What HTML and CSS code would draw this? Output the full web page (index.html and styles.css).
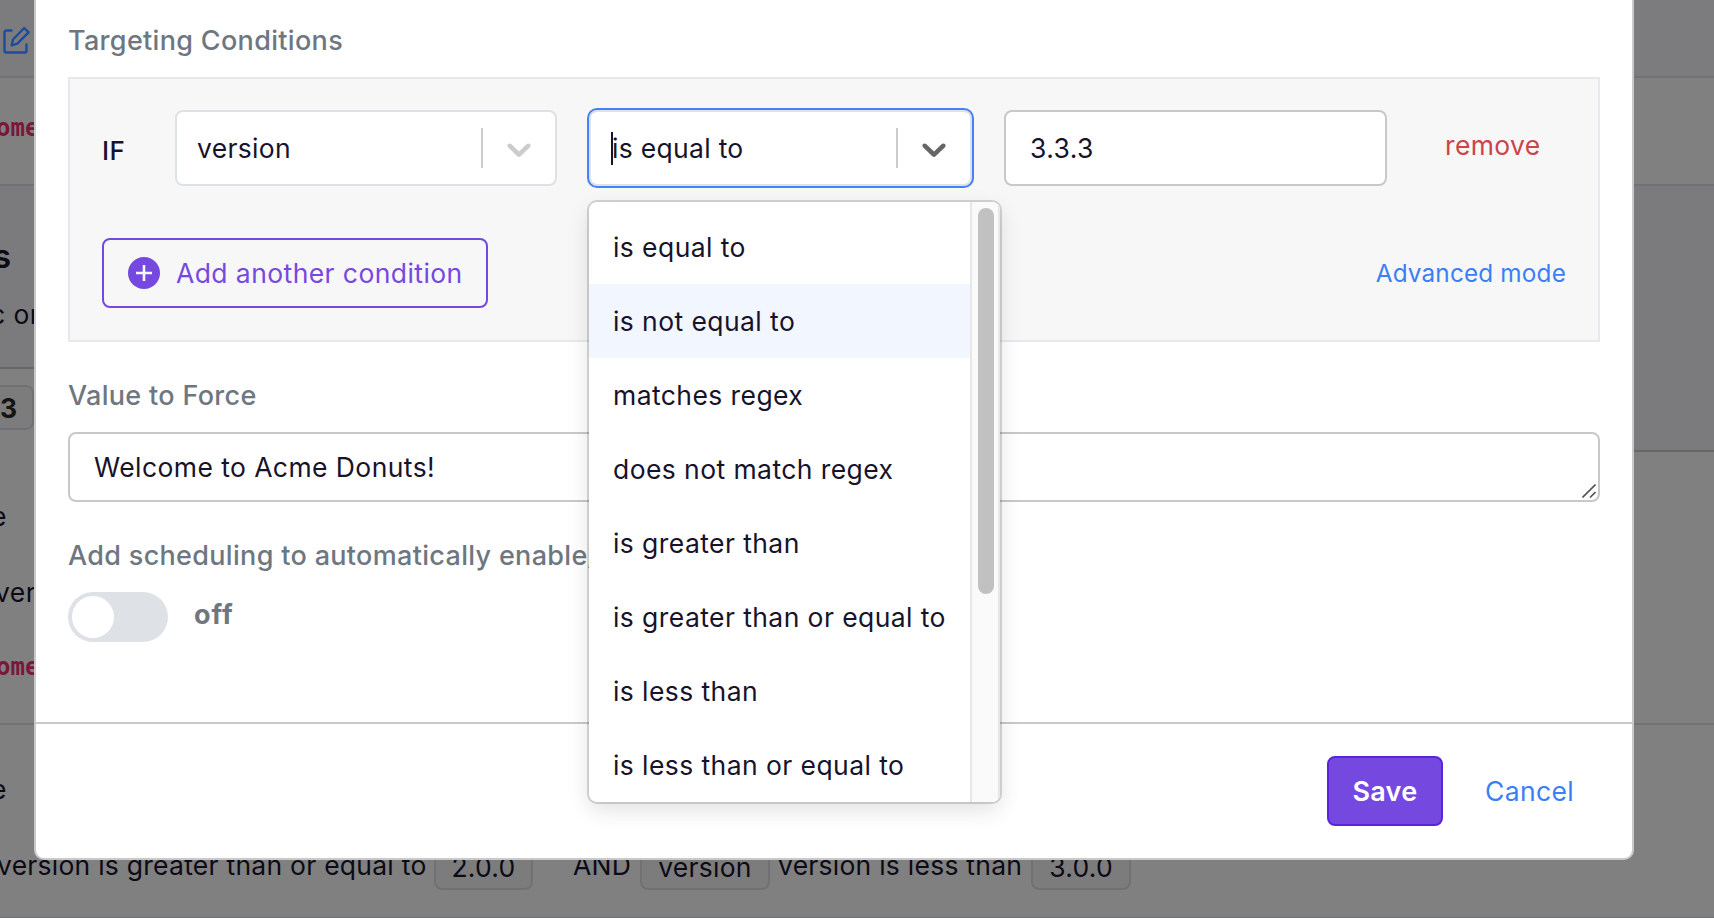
FILE: index.html
```html
<!DOCTYPE html>
<html lang="en">
<head>
<meta charset="utf-8">
<title>Targeting Conditions</title>
<link rel="stylesheet" href="styles.css">
</head>
<body>
<div class="page">
  <div class="page-row row-title">
    <svg class="edit-icon" viewBox="0 0 28 28" fill="none" stroke="#1d4c9c" stroke-width="2.400" stroke-linecap="round" stroke-linejoin="round"><path d="M8.500 4.500H3.500Q1.500 4.500 1.500 6.500V24.500Q1.500 26.500 3.500 26.500H21.500Q23.500 26.500 23.500 24.500V18.500M8.700 19.300L10 13.500L21.200 2L25.600 6.400L14.300 17.700Z"/></svg>
  </div>
  <div class="page-row row-code"><span class="code">ome</span></div>
  <div class="page-row row-head"><span class="big">s</span><span class="small">c or</span></div>
  <div class="page-row row-rules">
    <span class="pill pill-three">3</span>
    <span class="frag frag-a">e</span>
    <span class="frag frag-b">ver</span>
    <span class="code frag-c">ome</span>
    <div class="right-block"></div>
  </div>
  <div class="page-row row-last">
    <span class="frag frag-d">e</span>
    <div class="rule-line">
      <span class="t1">version is greater than or equal to</span><span class="pill p1">2.0.0</span><span class="t2">AND</span><span class="pill p2">version</span><span class="t3">version is less than</span><span class="pill p3">3.0.0</span>
    </div>
  </div>
</div>
<div class="modal">
  <div class="modal-body">
    <div class="label label-first">Targeting Conditions</div>
    <div class="panel">
      <div class="condition">
        <span class="if">IF</span>
        <div class="select select-attr">
          <span class="value">version</span><i class="sep"></i>
          <svg class="chevron" viewBox="0 0 20 20" fill="#ccc"><path d="M4.516 7.548c0.436-0.446 1.043-0.481 1.576 0l3.908 3.747 3.908-3.747c0.533-0.481 1.141-0.446 1.574 0 0.436 0.445 0.408 1.197 0 1.615-0.406 0.418-4.695 4.502-4.695 4.502-0.217 0.223-0.502 0.335-0.787 0.335s-0.570-0.112-0.789-0.335c0 0-4.287-4.084-4.695-4.502s-0.436-1.170 0-1.615z"/></svg>
        </div>
        <div class="select select-op">
          <i class="caret"></i><span class="value">is equal to</span><i class="sep"></i>
          <svg class="chevron" viewBox="0 0 20 20" fill="#666"><path d="M4.516 7.548c0.436-0.446 1.043-0.481 1.576 0l3.908 3.747 3.908-3.747c0.533-0.481 1.141-0.446 1.574 0 0.436 0.445 0.408 1.197 0 1.615-0.406 0.418-4.695 4.502-4.695 4.502-0.217 0.223-0.502 0.335-0.787 0.335s-0.570-0.112-0.789-0.335c0 0-4.287-4.084-4.695-4.502s-0.436-1.170 0-1.615z"/></svg>
          <div class="menu">
            <div class="options">
              <div class="option">is equal to</div>
              <div class="option focused">is not equal to</div>
              <div class="option">matches regex</div>
              <div class="option">does not match regex</div>
              <div class="option">is greater than</div>
              <div class="option">is greater than or equal to</div>
              <div class="option">is less than</div>
              <div class="option">is less than or equal to</div>
            </div>
            <div class="track"><div class="thumb"></div></div>
          </div>
        </div>
        <div class="input">3.3.3</div>
        <span class="remove">remove</span>
      </div>
      <div class="actions">
        <div class="add"><svg class="plus" viewBox="0 0 32 32"><circle cx="16" cy="16" r="16" fill="#7549e0"/><path d="M16 8v16M8 16h16" stroke="#f7f7f7" stroke-width="2.600"/></svg><span>Add another condition</span></div>
        <span class="advanced">Advanced mode</span>
      </div>
    </div>
    <div class="label label-value">Value to Force</div>
    <div class="textarea"><span>Welcome to Acme Donuts!</span>
      <svg class="grip" viewBox="0 0 14 14" stroke="#555" stroke-width="1.600"><path d="M0.500 13.500L13.500 0.500M8 13.500L13.500 8"/></svg>
    </div>
    <div class="label label-schedule">Add scheduling to automatically enable/</div>
    <div class="toggle-row"><div class="toggle"><div class="knob"></div></div><span class="off">off</span></div>
  </div>
  <div class="modal-footer">
    <div class="save">Save</div>
    <span class="cancel">Cancel</span>
  </div>
</div>
</body>
</html>
```
FILE: styles.css
```css
* { box-sizing: border-box; }
body {
  margin: 0;
  width: 1714px;
  height: 918px;
  overflow: hidden;
  position: relative;
  background: #808080;
  color: #17132a;
  font: 26.5px/42px Inter, sans-serif;
  letter-spacing: 0.42px;
  white-space: nowrap;
}

/* dimmed page behind the dialog */
.page { color: #0c0a15; height: 918px; overflow: hidden; display: flex; flex-direction: column; }
.page-row { flex: none; border-bottom: 2px solid #717275; }
.row-title { height: 78px; background: #7c7c7e; padding: 26px 0 0 3px; }
.edit-icon { display: block; width: 28px; height: 28px; }
.row-code { height: 108px; padding-top: 31px; }
.code { display: block; margin-left: -4px; font: bold 24px/38px "DejaVu Sans Mono", monospace; color: #7a1739; letter-spacing: 0; }
.row-head { height: 183px; background: #7b7b7d; border-color: #676767; display: flex; flex-direction: column; }
.big { font-size: 33px; font-weight: 600; margin: 49px 0 0 -7px; }
.small { margin: 16px 0 0 -10px; }
.row-rules { height: 356px; display: flex; flex-direction: column; align-items: flex-start; position: relative; }
.pill { display: inline-block; border: 2px solid #717174; border-radius: 8px; background: #7c7c7c; height: 45px; line-height: 40px; text-align: center; }
.pill-three { margin: 16px 0 0 -20px; padding: 0 18px; width: 54px; text-align: right; font-weight: 700; line-height: 42px; color: #141414; }
.frag { margin-left: -9px; }
.frag-a { margin-top: 65px; }
.frag-b { margin: 34px 0 0 -5px; }
.frag-c { margin-top: 35px; }
.right-block { position: absolute; right: 0; top: -2px; width: 120px; height: 85px; background: #7b7b7d; border-bottom: 2px solid #676767; }
.row-last { height: 194px; padding-top: 43px; display: flex; flex-direction: column; }
.rule-line { display: flex; align-items: flex-start; margin: 34px 0 0 -3px; letter-spacing: 0.25px; }
.rule-line .pill { margin-top: 1px; }
.t1 { width: 437px; }
.p1 { width: 99px; }
.t2 { margin-left: 40px; width: 67px; }
.p2 { width: 130px; }
.t3 { margin-left: 8px; width: 253px; }
.p3 { width: 100px; }

/* dialog */
.modal {
  position: absolute;
  left: 34px;
  top: -20px;
  width: 1600px;
  height: 880px;
  background: #fff;
  border: 2px solid #c9c9c9;
  border-radius: 10px;
  display: flex;
  flex-direction: column;
}
.modal-body { height: 740px; padding: 38px 32px 0; }
.label { color: #6e777f; font-size: 27px; font-weight: 500; height: 42px; letter-spacing: 0.32px; }
.panel { margin-top: 15px; height: 265px; background: #f7f7f7; border: 2px solid #e8e9ee; padding: 31px 32px 0; }
.condition { display: flex; height: 76px; align-items: flex-start; }
.if { width: 73px; padding-top: 20px; font-weight: 500; font-size: 26px; }
.select { position: relative; height: 76px; background: #fff; border: 2px solid #dee2e6; border-radius: 8px; display: flex; align-items: center; }
.select .value { flex: 1; padding-left: 20px; letter-spacing: 0.3px; }
.select-attr { width: 382px; }
.select-op { width: 383px; margin-left: 32px; box-shadow: 0 0 0 2px #4482f8; }
.select-op .value { padding-left: 0; margin-left: -1px; }
.sep { width: 2px; height: 40px; background: #ccc; }
.chevron { width: 40px; height: 40px; margin: 1px 16px 0; }
.caret { width: 2px; height: 33px; margin-left: 20px; background: #17132a; }
.input { width: 383px; height: 76px; margin-left: 32px; border: 2px solid #c8c8c8; border-radius: 8px; background: #fff; padding: 15px 24px; }
.remove { margin: 14px 0 0 58px; color: #cb444a; letter-spacing: 0.35px; }
.menu { position: absolute; z-index: 2; left: -2px; top: 90px; width: 411px; height: 600px; background: #fff; border-radius: 8px; overflow: hidden; box-shadow: 0 0 0 2px rgba(0,0,0,.15), 0 8px 22px rgba(0,0,0,.12); display: flex; }
.options { flex: 1; min-width: 0; padding-top: 8px; }
.option { height: 74px; padding: 16px 0 0 24px; }
.focused { background: #f2f6fe; }
.track { flex: none; width: 30px; background: #fafafa; border: 2px solid #e7e7e7; border-width: 0 2px; padding: 6px 0 0 6px; }
.thumb { width: 16px; height: 386px; border-radius: 8px; background: #c1c1c1; }
.actions { display: flex; justify-content: space-between; align-items: flex-start; margin-top: 52px; }
.add { width: 386px; height: 70px; border: 2px solid #7549e0; border-radius: 8px; color: #7549e0; display: flex; align-items: center; padding-left: 24px; gap: 16px; }
.plus { width: 32px; height: 32px; }
.advanced { color: #3b7ff5; margin-top: 14px; font-size: 24.3px; letter-spacing: 0.18px; }
.label-value { margin-top: 33px; }
.textarea { position: relative; margin-top: 15px; height: 70px; border: 2px solid #c8c8c8; border-radius: 8px; padding: 12px 24px; }
.grip { position: absolute; right: 2px; bottom: 2px; width: 14px; height: 14px; }
.label-schedule { margin-top: 33px; }
.toggle-row { display: flex; margin-top: 15px; }
.toggle { width: 100px; height: 50px; border-radius: 25px; background: #dee2e7; padding: 4px; }
.knob { width: 42px; height: 42px; border-radius: 50%; background: #fff; }
.off { margin: 2px 0 0 26px; font-weight: 700; font-size: 27px; letter-spacing: 0.9px; color: #6e777f; }
.modal-footer { flex: 1; border-top: 2px solid #c9c9c9; padding: 32px 58px 0 0; display: flex; justify-content: flex-end; }
.save { width: 116px; height: 70px; border: 2px solid #5a25da; border-radius: 8px; background: #7549e0; color: #fff; font-weight: 600; font-size: 27px; letter-spacing: 0.3px; text-align: center; line-height: 67px; }
.cancel { margin-left: 42px; color: #3b7ff5; line-height: 70px; letter-spacing: 0.35px; }
```
